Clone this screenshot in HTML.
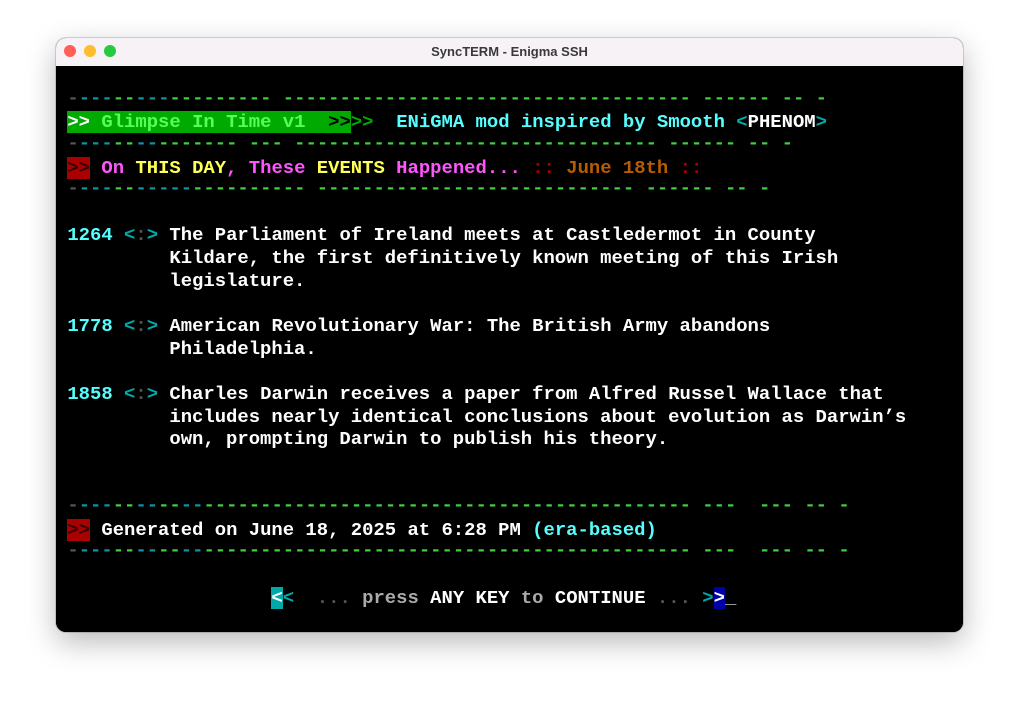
<!DOCTYPE html>
<html><head><meta charset="utf-8"><style>
html,body{margin:0;padding:0;background:#fff;width:1019px;height:707px;overflow:hidden}
.win{position:absolute;left:56px;top:38px;width:907px;height:594px;border-radius:10px;overflow:hidden;box-shadow:0 10px 30px rgba(0,0,0,.28),0 0 0 1px rgba(0,0,0,.15);background:#000}
.tb{position:absolute;left:0;top:0;width:907px;height:28px;background:#f6f2f5;border-bottom:1px solid #d8d4d8;font:bold 13px "Liberation Sans",sans-serif;color:#3a3a3a;text-align:center;line-height:28px}
.dot{position:absolute;top:7px;width:12px;height:12px;border-radius:50%}
.term{position:absolute;left:0;top:28px;width:907px;height:566px;background:#000}
pre{margin:0;font-family:"Liberation Mono",monospace;font-size:18.9px;line-height:22.64px;color:#fff;font-weight:bold;white-space:pre}
.g{color:#3fcf3f}.c{color:#0b95a3}.k{color:#555}.C{color:#55ffff}.dc{color:#00aaaa}
.m{color:#ff55ff}.y{color:#ffff55}.r{color:#aa0000}.o{color:#b85c00}.a{color:#aaa}.w{color:#fff}
.gb{background:#00aa00}.rb{background:#aa0000;color:#300}.cb{background:#00aaaa;color:#fff}.bb{background:#0000aa;color:#fff}
.d{position:relative;top:-2px}
</style></head><body>
<div class="win">
<div class="tb">SyncTERM - Enigma SSH
<span class="dot" style="left:8px;background:#fe5f57"></span>
<span class="dot" style="left:28px;background:#febc2e"></span>
<span class="dot" style="left:48px;background:#28c840"></span></div>
<div class="term"><pre>&#32;
<span class="d"> <span class="k">-</span><span class="c">---</span><span class="g">--</span><span class="c">---</span><span class="g">---------</span> <span class="g">------------------------------------</span> <span class="g">------</span> <span class="g">--</span> <span class="g">-</span></span>
 <span class="gb"><span class="w">&gt;&gt;</span> <span style="color:#55ff55">Glimpse In Time v1</span>  <span style="color:#000">&gt;&gt;</span></span><span style="color:#00aa00">&gt;&gt;</span>  <span class="C">ENiGMA mod inspired by Smooth </span><span class="dc">&lt;</span><span class="w">PHENOM</span><span class="dc">&gt;</span>
<span class="d"> <span class="k">-</span><span class="c">---</span><span class="g">--</span><span class="c">--</span><span class="g">-------</span> <span class="g">---</span> <span class="g">--------------------------------</span> <span class="g">------</span> <span class="g">--</span> <span class="g">-</span></span>
 <span class="rb">&gt;&gt;</span> <span class="m">On </span><span class="y">THIS DAY</span><span class="m">, These </span><span class="y">EVENTS</span><span class="m"> Happened... </span><span class="r">::</span> <span class="o">June 18th</span> <span class="r">::</span>
<span class="d"> <span class="k">-</span><span class="c">---</span><span class="g">--</span><span class="c">-----</span><span class="g">----------</span> <span class="g">----------------------------</span> <span class="g">------</span> <span class="g">--</span> <span class="g">-</span></span>

 <span class="C">1264</span> <span class="dc">&lt;</span><span class="k">:</span><span class="dc">&gt;</span> The Parliament of Ireland meets at Castledermot in County
          Kildare, the first definitively known meeting of this Irish
          legislature.

 <span class="C">1778</span> <span class="dc">&lt;</span><span class="k">:</span><span class="dc">&gt;</span> American Revolutionary War: The British Army abandons
          Philadelphia.

 <span class="C">1858</span> <span class="dc">&lt;</span><span class="k">:</span><span class="dc">&gt;</span> Charles Darwin receives a paper from Alfred Russel Wallace that
          includes nearly identical conclusions about evolution as Darwin’s
          own, prompting Darwin to publish his theory.


<span class="d"> <span class="k">-</span><span class="c">---</span><span class="g">--</span><span class="c">--</span><span class="g">--</span><span class="c">--</span><span class="g">-------------------------------------------</span> <span class="g">---</span>  <span class="g">---</span> <span class="g">--</span> <span class="g">-</span></span>
 <span class="rb">&gt;&gt;</span> Generated on June 18, 2025 at 6:28 PM <span class="C">(era-based)</span>
<span class="d"> <span class="k">-</span><span class="c">---</span><span class="g">--</span><span class="c">--</span><span class="g">--</span><span class="c">--</span><span class="g">-------------------------------------------</span> <span class="g">---</span>  <span class="g">---</span> <span class="g">--</span> <span class="g">-</span></span>

                   <span class="cb">&lt;</span><span class="dc">&lt;</span>  <span class="k">...</span> <span class="a">press</span> ANY KEY <span class="a">to</span> CONTINUE <span class="k">...</span> <span class="dc">&gt;</span><span class="bb">&gt;</span><span class="a">_</span>
</pre></div>
</div>
</body></html>
